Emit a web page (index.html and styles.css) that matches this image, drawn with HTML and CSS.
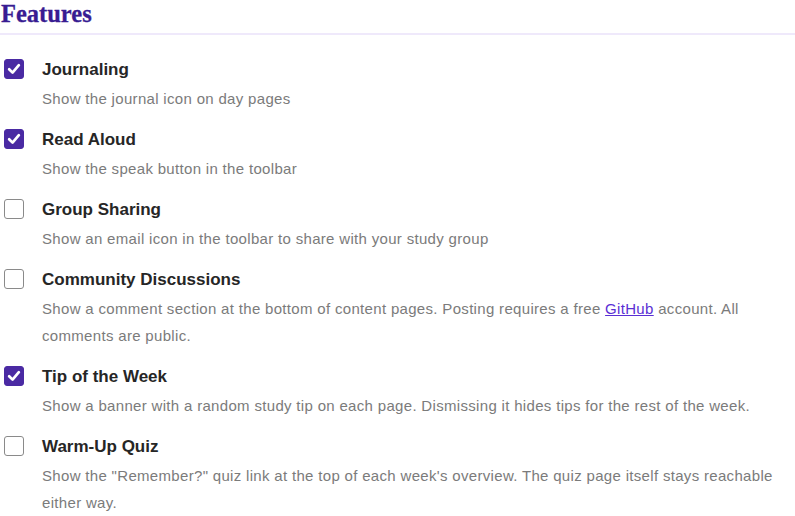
FILE: index.html
```html
<!DOCTYPE html>
<html lang="en">
<head>
<meta charset="utf-8">
<title>Features</title>
<link rel="stylesheet" href="styles.css">
</head>
<body>
<section class="features">
  <h2 class="heading">Features</h2>
  <ul class="list">
    <li class="item">
      <span class="box checked"><svg viewBox="0 0 20 20"><path d="M4.6 10.2 L8.4 14 L15.4 5.8"/></svg></span>
      <div class="text">
        <div class="title">Journaling</div>
        <p class="desc">Show the journal icon on day pages</p>
      </div>
    </li>
    <li class="item">
      <span class="box checked"><svg viewBox="0 0 20 20"><path d="M4.6 10.2 L8.4 14 L15.4 5.8"/></svg></span>
      <div class="text">
        <div class="title">Read Aloud</div>
        <p class="desc">Show the speak button in the toolbar</p>
      </div>
    </li>
    <li class="item">
      <span class="box"></span>
      <div class="text">
        <div class="title">Group Sharing</div>
        <p class="desc">Show an email icon in the toolbar to share with your study group</p>
      </div>
    </li>
    <li class="item">
      <span class="box"></span>
      <div class="text">
        <div class="title">Community Discussions</div>
        <p class="desc">Show a comment section at the bottom of content pages. Posting requires a free <a href="#" class="link">GitHub</a> account. All comments are public.</p>
      </div>
    </li>
    <li class="item">
      <span class="box checked"><svg viewBox="0 0 20 20"><path d="M4.6 10.2 L8.4 14 L15.4 5.8"/></svg></span>
      <div class="text">
        <div class="title">Tip of the Week</div>
        <p class="desc">Show a banner with a random study tip on each page. Dismissing it hides tips for the rest of the week.</p>
      </div>
    </li>
    <li class="item">
      <span class="box"></span>
      <div class="text">
        <div class="title">Warm-Up Quiz</div>
        <p class="desc">Show the "Remember?" quiz link at the top of each week's overview. The quiz page itself stays reachable either way.</p>
      </div>
    </li>
  </ul>
</section>
</body>
</html>
```

FILE: styles.css
```css
html, body {
  margin: 0;
  padding: 0;
  background: #ffffff;
}

body {
  font-family: "Liberation Sans", Arial, sans-serif;
  width: 795px;
  height: 516px;
  overflow: hidden;
}

.features {
  border-bottom: 1px solid #ececec;
}

.heading {
  margin: 0;
  font-family: "Liberation Serif", "Times New Roman", serif;
  font-weight: 700;
  font-size: 24.5px;
  line-height: 28px;
  color: #381c92;
  padding: 0 0 5px 1px;
  border-bottom: 2px solid #efe9fb;
  -webkit-text-stroke: 0.3px #381c92;
}

.list {
  list-style: none;
  margin: 0;
  padding: 21px 0 0 0;
}

.item {
  display: flex;
  align-items: flex-start;
  padding-bottom: 14px;
}

.item:last-child {
  padding-bottom: 0;
}

.box {
  flex: none;
  box-sizing: border-box;
  width: 20px;
  height: 20px;
  margin: 3px 0 0 4px;
  border: 1px solid #8a8a8a;
  border-radius: 3px;
  background: #fff;
  display: flex;
  align-items: center;
  justify-content: center;
}

.box.checked {
  background: #4a2aa3;
  border-color: #4a2aa3;
}

.box svg {
  width: 20px;
  height: 20px;
  fill: none;
  stroke: #fff;
  stroke-width: 3;
  stroke-linecap: round;
  stroke-linejoin: round;
}

.text {
  margin-left: 18px;
  flex: 1;
  min-width: 0;
}

.title {
  font-weight: 700;
  font-size: 17px;
  line-height: 28px;
  color: #262626;
}

.desc {
  margin: 1px 0 0 0;
  font-size: 15px;
  letter-spacing: 0.32px;
  line-height: 27px;
  color: #7b7b7b;
}

.link {
  color: #5a2fd4;
  text-decoration: underline;
}
```
